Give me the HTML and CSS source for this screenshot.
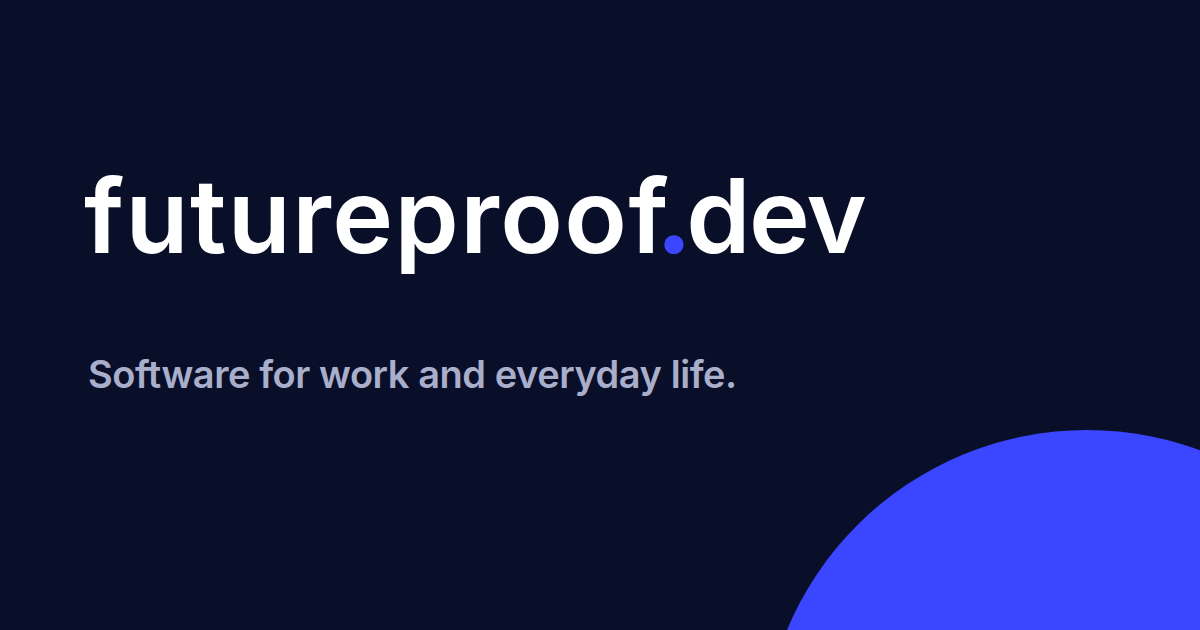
FILE: index.html
```html
<!DOCTYPE html>
<html lang="en">
<head>
    <meta charset="UTF-8">
    <title>futureproof.dev</title>
    <link rel="stylesheet" href="styles.css">
</head>
<body>
    <div class="card">
        <h1 class="logo"><span class="name">futureproo<span class="kern">f</span></span><span class="dot">.</span>dev</h1>
        <p class="tagline">Software for work and everyday life.</p>
        <div class="circle"></div>
    </div>
</body>
</html>
```

FILE: styles.css
```css
* {
    margin: 0;
    padding: 0;
    box-sizing: border-box;
}

body {
    width: 1200px;
    height: 630px;
    overflow: hidden;
    background-color: #0a0f29;
}

.card {
    position: relative;
    width: 100%;
    height: 100%;
    padding: 154px 0 0 84px;
    overflow: hidden;
}

.logo {
    font-family: Inter, sans-serif;
    font-size: 103px;
    font-weight: 600;
    line-height: 124px;
    letter-spacing: -1.5px;
    color: #fff;
}

.logo .name {
    letter-spacing: 1.4px;
}

/* pulls the dot in under the hook of the f */
.logo .kern {
    letter-spacing: -12.6px;
}

.logo .dot {
    letter-spacing: -6px;
    font-weight: 800;
    color: #3a46ff;
}

.tagline {
    margin-top: 73px;
    margin-left: 4px;
    font-family: Inter, sans-serif;
    font-size: 38px;
    font-weight: 600;
    line-height: 46px;
    letter-spacing: -0.45px;
    color: #a9aecb;
}

.circle {
    position: absolute;
    left: 762px;
    top: 430px;
    width: 650px;
    height: 650px;
    border-radius: 50%;
    background-color: #3a46ff;
}
```
